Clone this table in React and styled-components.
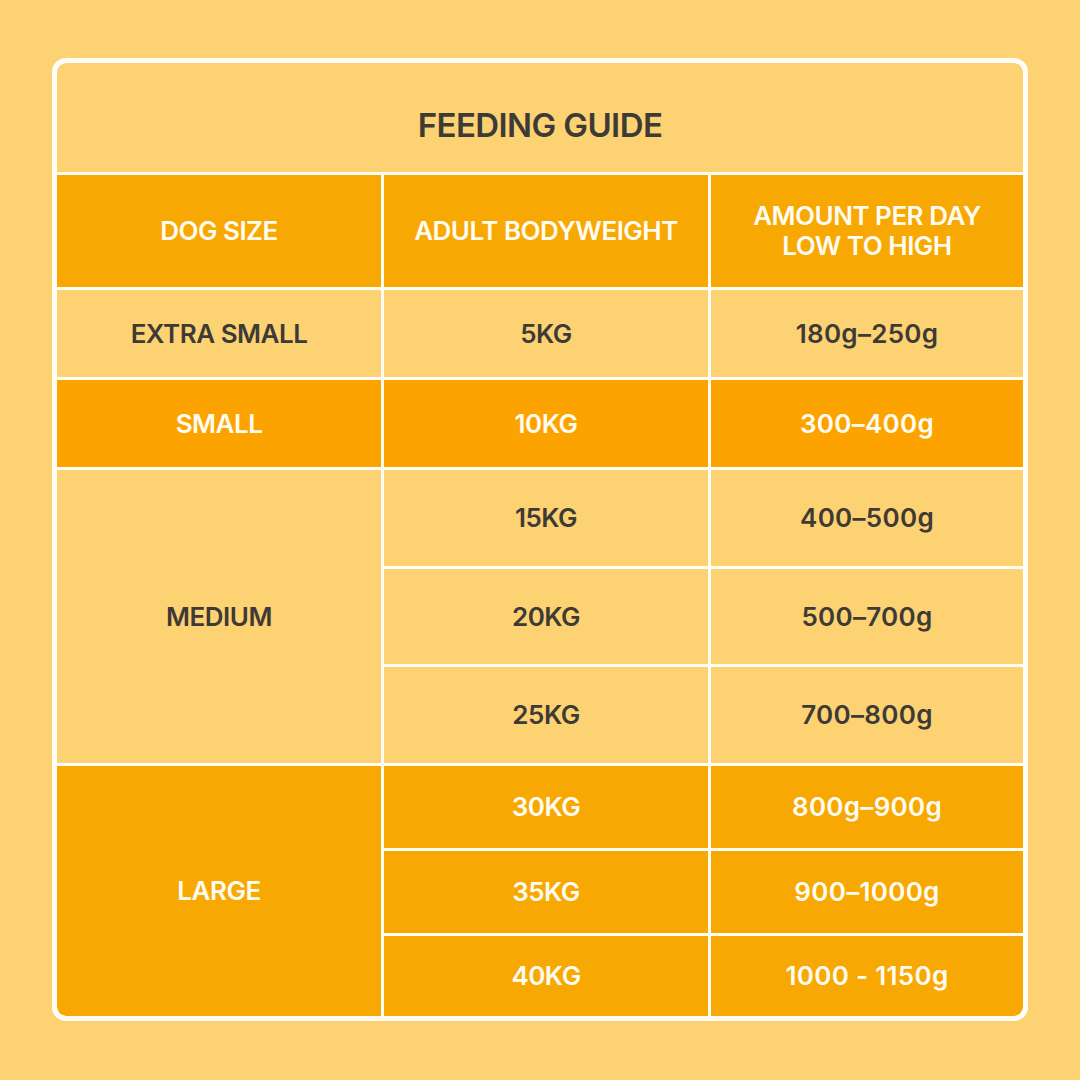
import React from "react";
import styled, { createGlobalStyle } from "styled-components";

const rows = [
  { size: "EXTRA SMALL", tone: "light", items: [["5KG", "180g–250g"]], heights: [87] },
  { size: "SMALL", tone: "bright", items: [["10KG", "300–400g"]], heights: [87] },
  {
    size: "MEDIUM",
    tone: "light",
    items: [
      ["15KG", "400–500g"],
      ["20KG", "500–700g"],
      ["25KG", "700–800g"],
    ],
    heights: [96, 95, 96],
  },
  {
    size: "LARGE",
    tone: "orange",
    items: [
      ["30KG", "800g–900g"],
      ["35KG", "900–1000g"],
      ["40KG", "1000 - 1150g"],
    ],
    heights: [82, 82, 80],
  },
];

const colors = {
  light: "#fdd273",
  orange: "#f8a803",
  bright: "#fda300",
};

export default function App() {
  const rowHeights = [112, ...rows.flatMap((r) => r.heights)];
  let line = 2;

  return (
    <>
      <GlobalStyle />
      <Page>
        <Frame>
          <Title>FEEDING GUIDE</Title>
          <Grid style={{ gridTemplateRows: rowHeights.map((h) => h + "px").join(" ") }}>
            <Cell tone="orange" light>DOG SIZE</Cell>
            <Cell tone="orange" light>ADULT BODYWEIGHT</Cell>
            <Cell tone="orange" light>
              AMOUNT PER DAY
              <br />
              LOW TO HIGH
            </Cell>
            {rows.map((group) => {
              const start = line;
              line += group.items.length;
              const light = group.tone !== "light";
              return (
                <React.Fragment key={group.size}>
                  <Cell
                    tone={group.tone}
                    light={light}
                    style={{ gridRow: `${start} / span ${group.items.length}` }}
                  >
                    {group.size}
                  </Cell>
                  {group.items.map(([weight, amount]) => (
                    <React.Fragment key={weight}>
                      <Cell tone={group.tone} light={light}>{weight}</Cell>
                      <Cell tone={group.tone} light={light} numeric>
                        {amount}
                      </Cell>
                    </React.Fragment>
                  ))}
                </React.Fragment>
              );
            })}
          </Grid>
        </Frame>
      </Page>
    </>
  );
}

const GlobalStyle = createGlobalStyle`
  body {
    margin: 0;
    background: #fdd273;
    font-family: Inter, "Liberation Sans", sans-serif;
  }
`;

const Page = styled.div`
  width: 1080px;
  height: 1080px;
  box-sizing: border-box;
  padding: 58px 52px;
  background: #fdd273;
`;

const Frame = styled.div`
  width: 976px;
  box-sizing: border-box;
  border: 5px solid #fffdf6;
  border-radius: 14px;
  background: #fffdf6;
  overflow: hidden;
  display: flex;
  flex-direction: column;
  gap: 3px;
`;

const Title = styled.div`
  height: 109px;
  display: flex;
  align-items: center;
  justify-content: center;
  padding-top: 15px;
  box-sizing: border-box;
  background: #fdd273;
  color: #3e3a35;
  font-size: 33px;
  font-weight: 600;
  letter-spacing: -0.6px;
  border-radius: 9px 9px 0 0;
`;

const Grid = styled.div`
  display: grid;
  grid-template-columns: 324px 324px 1fr;
  gap: 3px;
  border-radius: 0 0 9px 9px;
  overflow: hidden;
`;

const Cell = styled.div`
  display: flex;
  align-items: center;
  justify-content: center;
  text-align: center;
  background: ${(p) => colors[p.tone]};
  color: ${(p) => (p.light ? "#fffcf2" : "#3e3a35")};
  font-size: 26px;
  font-weight: 600;
  line-height: 30px;
  letter-spacing: ${(p) => (p.numeric ? "0.3px" : "-0.5px")};
`;
